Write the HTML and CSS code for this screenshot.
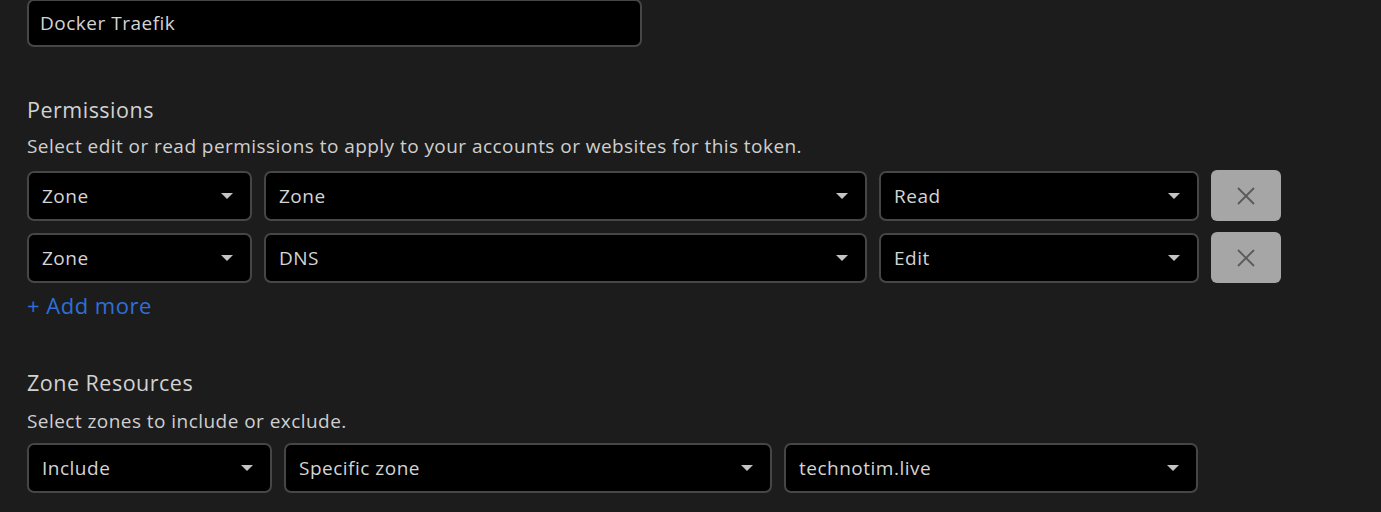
FILE: index.html
```html
<!DOCTYPE html>
<html>
<head>
<meta charset="utf-8">
<link rel="stylesheet" href="styles.css">
</head>
<body>
<div class="page">
  <div class="field name-field"><span class="val">Docker Traefik</span></div>

  <h2 class="heading perm-heading">Permissions</h2>
  <p class="desc">Select edit or read permissions to apply to your accounts or websites for this token.</p>

  <div class="row perm-row">
    <div class="field sel w-a"><span class="val">Zone</span><span class="caret"></span></div>
    <div class="field sel w-b"><span class="val">Zone</span><span class="caret"></span></div>
    <div class="field sel w-c"><span class="val">Read</span><span class="caret"></span></div>
    <div class="remove"><svg width="22" height="22" viewBox="0 0 22 22"><path d="M3 3 L19 19 M19 3 L3 19" stroke="#5a5a5a" stroke-width="1.8" fill="none"/></svg></div>
  </div>
  <div class="row perm-row">
    <div class="field sel w-a"><span class="val">Zone</span><span class="caret"></span></div>
    <div class="field sel w-b"><span class="val">DNS</span><span class="caret"></span></div>
    <div class="field sel w-c"><span class="val">Edit</span><span class="caret"></span></div>
    <div class="remove"><svg width="22" height="22" viewBox="0 0 22 22"><path d="M3 3 L19 19 M19 3 L3 19" stroke="#5a5a5a" stroke-width="1.8" fill="none"/></svg></div>
  </div>
  <div class="add">+ Add more</div>

  <h2 class="heading zone-heading">Zone Resources</h2>
  <p class="desc">Select zones to include or exclude.</p>

  <div class="row zone-row">
    <div class="field sel w-d"><span class="val">Include</span><span class="caret"></span></div>
    <div class="field sel w-e"><span class="val">Specific zone</span><span class="caret"></span></div>
    <div class="field sel w-f"><span class="val">technotim.live</span><span class="caret"></span></div>
  </div>
  <div class="add add-bottom">+ Add more</div>
</div>
</body>
</html>
```

FILE: styles.css
```css
* { box-sizing: border-box; }
html, body {
  margin: 0;
  padding: 0;
  background: #1c1c1c;
  overflow: hidden;
}
body {
  width: 1381px;
  height: 512px;
  font-family: "Open Sans", Lato, sans-serif;
  color: #d6d6d6;
}
.page {
  padding-left: 27px;
}
.field {
  background: #000;
  border: 2px solid #464646;
  border-radius: 7px;
  height: 50px;
  display: flex;
  align-items: center;
  padding: 0 14px 0 13px;
  font-size: 19px;
  letter-spacing: 0.5px;
  color: #d4d4d4;
}
.val { flex: 1; }
.name-field {
  width: 615px;
  height: 48px;
  margin-top: -1px;
  padding-left: 11px;
}
.caret {
  width: 0;
  height: 0;
  border-left: 6px solid transparent;
  border-right: 6px solid transparent;
  border-top: 6px solid #c4c4c4;
  margin-right: 3px;
}
.heading {
  margin: 0;
  font-weight: 400;
  font-size: 21.5px;
  letter-spacing: 0.5px;
  color: #d2d2d2;
  line-height: 28px;
}
.perm-heading { margin-top: 49px; }
.zone-heading { margin-top: 50px; }
.desc {
  margin: 0;
  font-size: 19px;
  letter-spacing: 0.45px;
  line-height: 24px;
  color: #cfcfcf;
}
.perm-heading + .desc { margin-top: 10px; }
.zone-heading + .desc { margin-top: 12px; }
.row {
  display: flex;
  gap: 12px;
}
.perm-row { margin-top: 13px; }
.perm-row + .perm-row { margin-top: 12px; }
.zone-row { margin-top: 10px; gap: 12px; }
.w-a { width: 225px; }
.w-b { width: 603px; }
.w-c { width: 320px; }
.w-d { width: 245px; }
.w-e { width: 488px; }
.w-f { width: 414px; }
.remove {
  width: 70px;
  height: 51px;
  margin-top: -1px;
  background: #a6a6a6;
  border-radius: 6px;
  display: flex;
  align-items: center;
  justify-content: center;
}
.add {
  margin-top: 8px;
  font-size: 22px;
  letter-spacing: 0.5px;
  line-height: 28px;
  color: #2e6fd8;
}
.add-bottom { margin-top: 12px; }
```
